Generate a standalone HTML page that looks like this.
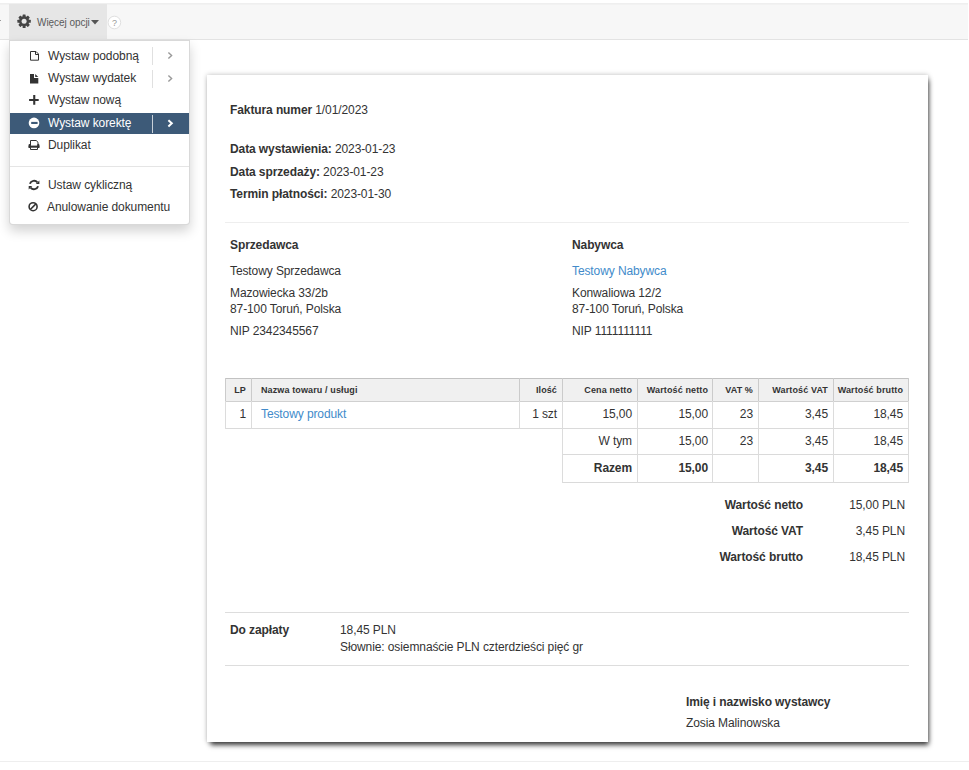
<!DOCTYPE html>
<html><head><meta charset="utf-8">
<style>
html,body{margin:0;padding:0;background:#fff;}
body{width:969px;height:770px;position:relative;overflow:hidden;font-family:"Liberation Sans",sans-serif;color:#333;}
.a{position:absolute;}
.t{position:absolute;white-space:nowrap;font-size:12px;line-height:14px;}
.b{font-weight:bold;}
.c{letter-spacing:-0.1px;}
.r{text-align:right;}
.m{letter-spacing:-0.08px;}
.blue{color:#428bca;}
.hl{position:absolute;height:1px;background:#eee;}
</style></head><body>

<!-- toolbar -->
<div class="a" style="left:0;top:3px;width:968px;height:35px;background:#f7f7f7;border-top:1px solid #efefef;border-bottom:1px solid #e3e3e3;"></div>
<div class="a" style="left:0;top:4px;width:968px;height:1px;background:#f2f2f2;"></div>
<div class="a" style="left:9px;top:4px;width:98px;height:35px;background:#e6e6e6;"></div>
<div class="a" style="left:0;top:20px;width:1px;height:1px;background:#999;"></div>
<!-- gear -->
<svg class="a" style="left:16px;top:13px" width="16" height="16" viewBox="0 0 16 16">
 <g fill="#444">
  <circle cx="8.1" cy="8.3" r="5"/>
  <rect x="6.6" y="1.6" width="3" height="13.4" rx="0.5"/>
  <rect x="6.6" y="1.6" width="3" height="13.4" rx="0.5" transform="rotate(45 8.1 8.3)"/>
  <rect x="6.6" y="1.6" width="3" height="13.4" rx="0.5" transform="rotate(90 8.1 8.3)"/>
  <rect x="6.6" y="1.6" width="3" height="13.4" rx="0.5" transform="rotate(135 8.1 8.3)"/>
 </g>
 <circle cx="8.1" cy="8.3" r="2.5" fill="#e6e6e6"/>
</svg>
<div class="t" style="left:37px;top:17px;font-size:10px;line-height:12px;color:#5a5a5a;letter-spacing:-0.05px">Więcej opcji</div>
<svg class="a" style="left:91px;top:20px" width="8" height="5" viewBox="0 0 8 5"><path d="M0 0H8L4 4.5Z" fill="#555"/></svg>
<svg class="a" style="left:104px;top:12px" width="22" height="22" viewBox="0 0 22 22"><circle cx="10.4" cy="10.5" r="6.3" fill="#fff" stroke="#e0e0e0" stroke-width="1"/></svg>
<div class="t" style="left:110px;top:18px;width:9px;text-align:center;font-size:9px;line-height:11px;color:#999">?</div>

<!-- card -->
<div class="a" style="left:207px;top:75px;width:721px;height:667px;background:#fff;box-shadow:0 0 5px rgba(0,0,0,.25),1.5px 4px 5px -1px rgba(0,0,0,.75);"></div>

<div class="t c" style="left:230px;top:103px"><b>Faktura numer</b> 1/01/2023</div>
<div class="t c" style="left:230px;top:142px"><b>Data wystawienia:</b> 2023-01-23</div>
<div class="t c" style="left:230px;top:165px"><b>Data sprzedaży:</b> 2023-01-23</div>
<div class="t c" style="left:230px;top:187px"><b>Termin płatności:</b> 2023-01-30</div>
<div class="hl" style="left:225px;top:222px;width:684px"></div>

<div class="t c b" style="left:230px;top:238px">Sprzedawca</div>
<div class="t c" style="left:230px;top:264px">Testowy Sprzedawca</div>
<div class="t c" style="left:230px;top:286px">Mazowiecka 33/2b</div>
<div class="t c" style="left:230px;top:302px">87-100 Toruń, Polska</div>
<div class="t c" style="left:230px;top:324px">NIP 2342345567</div>

<div class="t c b" style="left:572px;top:238px">Nabywca</div>
<div class="t c blue" style="left:572px;top:264px">Testowy Nabywca</div>
<div class="t c" style="left:572px;top:286px">Konwaliowa 12/2</div>
<div class="t c" style="left:572px;top:302px">87-100 Toruń, Polska</div>
<div class="t c" style="left:572px;top:324px">NIP 1111111111</div>

<!-- table -->
<div class="a" style="left:225px;top:378px;width:683px;height:23px;background:#f0f0f0;"></div>
<svg class="a" style="left:0;top:0" width="969" height="770">
 <g stroke-width="1" fill="none" shape-rendering="crispEdges">
  <path stroke="#c2c2c2" d="M225 378.5H909"/>
  <path stroke="#d0d0d0" d="M225 401.5H909"/>
  <path stroke="#dadada" d="M225 428.5H909M562 454.5H909M562 482.5H909"/>
  <path stroke="#cbcbcb" d="M225.5 378V401M251.5 378V401M519.5 378V401M562.5 378V401M637.5 378V401M712.5 378V401M758.5 378V401M833.5 378V401M908.5 378V401"/>
  <path stroke="#dcdcdc" d="M225.5 401V429M251.5 401V429M519.5 401V429M562.5 401V483M637.5 401V483M712.5 401V483M758.5 401V483M833.5 401V483M908.5 401V483"/>
 </g>
</svg>
<div class="t c b" style="left:226px;top:385px;width:20px;text-align:right;font-size:9px;line-height:10px;letter-spacing:0.12px">LP</div>
<div class="t c b" style="left:261px;top:385px;font-size:9px;line-height:10px;letter-spacing:0.12px">Nazwa towaru / usługi</div>
<div class="t c b r" style="left:520px;top:385px;width:37px;font-size:9px;line-height:10px;letter-spacing:0.12px">Ilość</div>
<div class="t c b r" style="left:562px;top:385px;width:70px;font-size:9px;line-height:10px;letter-spacing:0.12px">Cena netto</div>
<div class="t c b r" style="left:637px;top:385px;width:71px;font-size:9px;line-height:10px;letter-spacing:0.12px">Wartość netto</div>
<div class="t c b r" style="left:712px;top:385px;width:41px;font-size:9px;line-height:10px;letter-spacing:0.12px">VAT %</div>
<div class="t c b r" style="left:758px;top:385px;width:70px;font-size:9px;line-height:10px;letter-spacing:0.12px">Wartość VAT</div>
<div class="t c b r" style="left:833px;top:385px;width:70px;font-size:9px;line-height:10px;letter-spacing:0.12px">Wartość brutto</div>

<div class="t c r" style="left:226px;top:407px;width:20px">1</div>
<div class="t c blue" style="left:261px;top:407px">Testowy produkt</div>
<div class="t c r" style="left:520px;top:407px;width:37px">1 szt</div>
<div class="t c r" style="left:562px;top:407px;width:70px">15,00</div>
<div class="t c r" style="left:637px;top:407px;width:71px">15,00</div>
<div class="t c r" style="left:712px;top:407px;width:41px">23</div>
<div class="t c r" style="left:758px;top:407px;width:70px">3,45</div>
<div class="t c r" style="left:833px;top:407px;width:70px">18,45</div>

<div class="t c r" style="left:562px;top:434px;width:70px">W tym</div>
<div class="t c r" style="left:637px;top:434px;width:71px">15,00</div>
<div class="t c r" style="left:712px;top:434px;width:41px">23</div>
<div class="t c r" style="left:758px;top:434px;width:70px">3,45</div>
<div class="t c r" style="left:833px;top:434px;width:70px">18,45</div>

<div class="t c r b" style="left:562px;top:461px;width:70px">Razem</div>
<div class="t c r b" style="left:637px;top:461px;width:71px">15,00</div>
<div class="t c r b" style="left:758px;top:461px;width:70px">3,45</div>
<div class="t c r b" style="left:833px;top:461px;width:70px">18,45</div>

<!-- summary -->
<div class="t c r b" style="left:603px;top:498px;width:200px">Wartość netto</div>
<div class="t c r" style="left:705px;top:498px;width:200px">15,00 PLN</div>
<div class="t c r b" style="left:603px;top:524px;width:200px">Wartość VAT</div>
<div class="t c r" style="left:705px;top:524px;width:200px">3,45 PLN</div>
<div class="t c r b" style="left:603px;top:550px;width:200px">Wartość brutto</div>
<div class="t c r" style="left:705px;top:550px;width:200px">18,45 PLN</div>

<div class="hl" style="left:225px;top:612px;width:684px;background:#dddddd"></div>
<div class="t c b" style="left:230px;top:623px">Do zapłaty</div>
<div class="t c" style="left:340px;top:623px">18,45 PLN</div>
<div class="t c" style="left:340px;top:640px">Słownie: osiemnaście PLN czterdzieści pięć gr</div>
<div class="hl" style="left:225px;top:665px;width:684px;background:#dddddd"></div>

<div class="t c b" style="left:686px;top:695px">Imię i nazwisko wystawcy</div>
<div class="t c" style="left:686px;top:716px">Zosia Malinowska</div>

<div class="hl" style="left:0;top:761px;width:969px;background:#eee"></div>

<!-- dropdown menu -->
<div class="a" style="left:9px;top:40px;width:179px;height:183px;background:#fff;border:1px solid rgba(0,0,0,.15);border-radius:0 0 4px 4px;box-shadow:0 6px 12px rgba(0,0,0,.175);"></div>
<div class="a" style="left:10px;top:113px;width:179px;height:21px;background:#3d5a78;"></div>
<div class="a" style="left:10px;top:166px;width:179px;height:1px;background:#e5e5e5;"></div>

<div class="t m" style="left:48px;top:49px">Wystaw podobną</div>
<div class="t m" style="left:48px;top:71px">Wystaw wydatek</div>
<div class="t m" style="left:48px;top:93px">Wystaw nową</div>
<div class="t m" style="left:48px;top:116px;color:#fff">Wystaw korektę</div>
<div class="t m" style="left:48px;top:138px">Duplikat</div>
<div class="t m" style="left:48px;top:178px">Ustaw cykliczną</div>
<div class="t m" style="left:47px;top:200px">Anulowanie dokumentu</div>

<div class="a" style="left:152px;top:47px;width:1px;height:18px;background:#e0e0e0"></div>
<div class="a" style="left:152px;top:70px;width:1px;height:18px;background:#e0e0e0"></div>
<div class="a" style="left:152px;top:115px;width:1px;height:18px;background:#c8d0d8"></div>
<svg class="a" style="left:162px;top:48px" width="16" height="16" viewBox="0 0 16 16"><path d="M6.4 4.6L9.6 7.6L6.4 10.6" stroke="#999" stroke-width="1.4" fill="none"/></svg>
<svg class="a" style="left:162px;top:71px" width="16" height="16" viewBox="0 0 16 16"><path d="M6.4 4.6L9.6 7.6L6.4 10.6" stroke="#999" stroke-width="1.4" fill="none"/></svg>
<svg class="a" style="left:162px;top:115px" width="16" height="16" viewBox="0 0 16 16"><path d="M6.4 5.2L9.8 8.3L6.4 11.4" stroke="#fff" stroke-width="2" fill="none"/></svg>

<!-- menu icons -->
<svg class="a" style="left:26px;top:48px" width="16" height="16" viewBox="0 0 16 16"><path d="M4.5 3.5H10L12.5 6V12.2H4.5Z" stroke="#333" stroke-width="1" fill="none"/><path d="M9.5 3.5V6.5H12.5" stroke="#333" stroke-width="1" fill="none"/></svg>
<svg class="a" style="left:26px;top:71px" width="16" height="16" viewBox="0 0 16 16"><path d="M4 3H8V7H12.3V12.6H4Z" fill="#333"/><path d="M9.2 3L12.3 6.1H9.2Z" fill="#333"/></svg>
<svg class="a" style="left:26px;top:92px" width="16" height="16" viewBox="0 0 16 16"><path d="M7.2 2.9H9.3V7H12.7V9H9.3V12.7H7.2V9H3.1V7H7.2Z" fill="#333"/></svg>
<svg class="a" style="left:26px;top:115px" width="16" height="16" viewBox="0 0 16 16"><circle cx="8" cy="7.9" r="5.3" fill="#fff"/><rect x="5.2" y="6.9" width="6.4" height="2.1" fill="#3d5a78"/></svg>
<svg class="a" style="left:26px;top:136px" width="16" height="16" viewBox="0 0 16 16"><path d="M4.5 9.5V4.5H10.2L12 6.3V9.5" stroke="#333" stroke-width="1" fill="none"/><rect x="2.6" y="9.6" width="10.8" height="2.1" fill="#333"/><rect x="2.6" y="8.1" width="2.2" height="4" rx="0.9" fill="#333"/><rect x="11.2" y="8.1" width="2.2" height="4" rx="0.9" fill="#333"/><path d="M4.5 11.5V13.5H11.5V11.5" stroke="#333" stroke-width="1" fill="none"/></svg>
<svg class="a" style="left:26px;top:177px" width="16" height="16" viewBox="0 0 16 16"><path d="M3.9 6.8A4.4 4.4 0 0 1 11.4 5.3" stroke="#333" stroke-width="1.9" fill="none"/><path d="M13.4 3.5V7.1H9.8Z" fill="#333"/><path d="M12.1 9.2A4.4 4.4 0 0 1 4.6 10.7" stroke="#333" stroke-width="1.9" fill="none"/><path d="M2.7 12.5V8.9H6.3Z" fill="#333"/></svg>
<svg class="a" style="left:26px;top:199px" width="16" height="16" viewBox="0 0 16 16"><circle cx="7.1" cy="7.7" r="4" stroke="#333" stroke-width="1.6" fill="none"/><path d="M4.3 10.5L9.9 4.9" stroke="#333" stroke-width="1.6"/></svg>

</body></html>
